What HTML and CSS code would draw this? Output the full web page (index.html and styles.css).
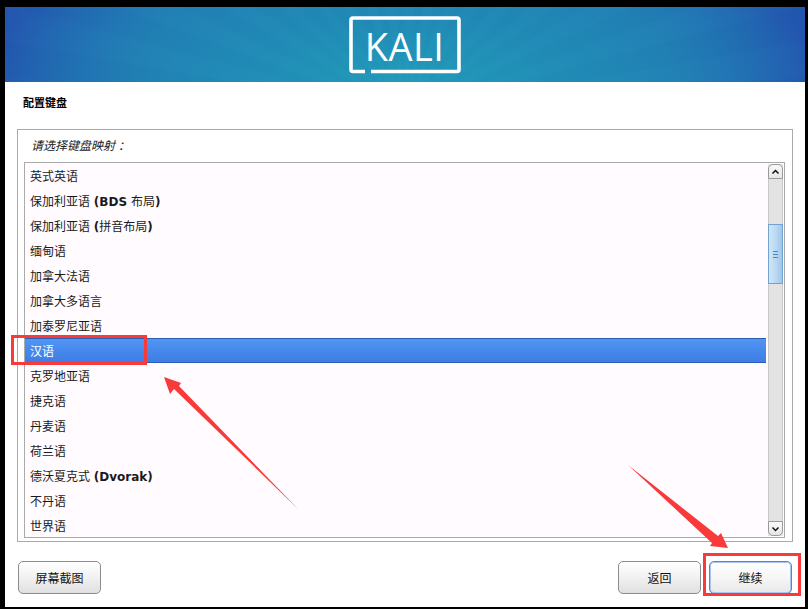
FILE: index.html
```html
<!DOCTYPE html>
<html lang="zh-CN">
<head>
<meta charset="utf-8">
<title>配置键盘</title>
<link rel="stylesheet" href="styles.css">
</head>
<body>
<div class="frame">
  <header class="banner">
    <div class="logo">
      <svg class="logo-box" viewBox="0 0 112 58" width="112" height="58">
        <path class="logo-line" d="M22 55.5H108a2 2 0 0 0 2-2V4a2 2 0 0 0-2-2H4a2 2 0 0 0-2 2V53.5a2 2 0 0 0 2 2H16"/>
      </svg>
      <span class="logo-text">KALI</span>
    </div>
  </header>
  <main class="content">
    <h1 class="title">配置键盘</h1>
    <section class="panel">
      <p class="prompt">请选择键盘映射<span class="colon">：</span></p>
      <div class="listbox">
        <ul class="list">
          <li class="item">英式英语</li>
          <li class="item">保加利亚语 <b class="latin">(BDS</b> 布局<b class="latin">)</b></li>
          <li class="item">保加利亚语 <b class="latin">(</b>拼音布局<b class="latin">)</b></li>
          <li class="item">缅甸语</li>
          <li class="item">加拿大法语</li>
          <li class="item">加拿大多语言</li>
          <li class="item">加泰罗尼亚语</li>
          <li class="item selected">汉语</li>
          <li class="item">克罗地亚语</li>
          <li class="item">捷克语</li>
          <li class="item">丹麦语</li>
          <li class="item">荷兰语</li>
          <li class="item">德沃夏克式 <b class="latin">(Dvorak)</b></li>
          <li class="item">不丹语</li>
          <li class="item">世界语</li>
        </ul>
        <div class="scrollbar">
          <div class="step step-up">
            <svg viewBox="0 0 15 14" width="15" height="14"><path class="chev" d="M4.5 8.5L7.5 5.5L10.5 8.5"/></svg>
          </div>
          <div class="track">
            <div class="thumb"><i></i><i></i><i></i></div>
          </div>
          <div class="step step-down">
            <svg viewBox="0 0 15 14" width="15" height="14"><path class="chev" d="M4.5 5.5L7.5 8.5L10.5 5.5"/></svg>
          </div>
        </div>
      </div>
    </section>
    <footer class="actions">
      <button class="btn">屏幕截图</button>
      <span class="spacer"></span>
      <button class="btn">返回</button>
      <button class="btn focus">继续</button>
    </footer>
  </main>
</div>
<svg class="marks" width="808" height="609" viewBox="0 0 808 609">
  <rect class="mark-box" x="12.5" y="336.5" width="133" height="27"/>
  <rect class="mark-box" x="704.5" y="554.5" width="95" height="40"/>
  <path class="mark-arrow" d="M164 377L181 383L179 386L298 509L174 389L170 394Z"/>
  <path class="mark-arrow" d="M628 465L718 536L721 533L728 548L710 546L712 543Z"/>
</svg>
</body>
</html>
```
FILE: styles.css
```css
* { box-sizing: border-box; }
html, body { margin: 0; padding: 0; }
body {
  width: 808px;
  height: 609px;
  background: #000;
  overflow: hidden;
  position: relative;
  font-family: "DejaVu Sans", "Noto Sans CJK SC", sans-serif;
  font-size: 12px;
  color: #1a1a1a;
}
.frame {
  width: 800px;
  height: 600px;
  margin: 7px 3px 2px 5px;
  background: #fff;
  display: flex;
  flex-direction: column;
}
.banner {
  height: 75px;
  flex: none;
  display: flex;
  justify-content: center;
  background:
    repeating-conic-gradient(from 0deg at 50% 140%, rgba(255,255,255,0.007) 0deg 5deg, rgba(0,0,0,0.007) 5deg 10deg),
    radial-gradient(ellipse 420px 150px at 50% 100%, #219bb9 0%, #2089b6 45%, rgba(33,115,177,0) 100%),
    linear-gradient(90deg, #2255af 0%, #2172b3 18%, #2186b6 50%, #2172b3 82%, #2255af 100%);
}
.logo {
  width: 112px;
  height: 58px;
  margin: 9px 0 0 -1px;
  position: relative;
  display: flex;
  align-items: center;
  justify-content: center;
}
.logo-box { position: absolute; left: 0; top: 0; }
.logo-line { fill: none; stroke: #fff; stroke-width: 3.6; }
.logo-text {
  font-family: "Open Sans", sans-serif;
  font-weight: 500;
  font-size: 38px;
  line-height: 1;
  letter-spacing: 0.4px;
  color: #fff;
  margin-top: 2px;
}
.content {
  flex: 1;
  display: flex;
  flex-direction: column;
  padding: 0 12px 0 12px;
}
.title {
  margin: 15px 0 0 6px;
  height: 32px;
  font-size: 11px;
  line-height: 14px;
  font-weight: 700;
  color: #000;
}
.panel {
  width: 776px;
  height: 413px;
  border: 1px solid #aaa;
  padding: 0 7px 0 6px;
  display: flex;
  flex-direction: column;
}
.prompt {
  margin: 0;
  height: 32px;
  padding: 7px 0 0 7px;
  font-size: 12px;
  line-height: 16px;
  font-style: italic;
  color: #222;
}
.colon { font-family: "Noto Sans CJK TC", sans-serif; margin-left: 3px; }
.listbox {
  flex: 1;
  border: 1px solid #aaa;
  background: #fffbff;
  display: flex;
  min-height: 0;
  margin-bottom: 3px;
}
.list {
  list-style: none;
  margin: 0;
  padding: 0;
  flex: 1;
  overflow: hidden;
}
.item {
  height: 25px;
  line-height: 29px;
  padding-left: 5px;
  width: 741px;
  white-space: nowrap;
}
.latin { font-weight: 700; }
.selected {
  color: #fff;
  background: linear-gradient(180deg, #5295f2 0%, #4687ec 55%, #3f7de4 100%);
  border-top: 1px solid #2a5fb5;
  border-bottom: 1px solid #2a5fb5;
  line-height: 27px;
}
.scrollbar {
  width: 15px;
  margin: 1px 1px 1px 0;
  display: flex;
  flex-direction: column;
  background: #e3e3e3;
  flex: none;
}
.step {
  height: 15px;
  background: linear-gradient(180deg, #fafafa, #e6e6e6);
  border: 1px solid #9a9a9a;
  flex: none;
  display: flex;
  align-items: center;
  justify-content: center;
}
.step-up { border-radius: 5px 5px 0 0; }
.step-down { border-radius: 0 0 5px 5px; }
.step svg { flex: none; }
.chev { fill: none; stroke: #111; stroke-width: 1.5; }
.track { flex: 1; padding-top: 45px; border-left: 1px solid #c8c8c8; border-right: 1px solid #c8c8c8; }
.thumb {
  height: 60px;
  margin: 0 -1px;
  background: linear-gradient(90deg, #d3e6f6 0%, #b5d6f2 60%, #a0c6ea 100%);
  border: 1px solid #6fa3d0;
  display: flex;
  flex-direction: column;
  align-items: center;
  justify-content: center;
  gap: 2px;
}
.thumb i { display: block; width: 5px; height: 1px; background: #4f86b8; }
.actions {
  display: flex;
  align-items: flex-start;
  gap: 8px;
  margin-top: 19px;
  padding: 0 0 0 1px;
  width: 775px;
}
.spacer { flex: 1; }
.btn {
  width: 83px;
  height: 33px;
  padding: 0;
  font: inherit;
  color: #111;
  border: 1px solid #8c8c8c;
  border-radius: 5px;
  background: linear-gradient(180deg, #ffffff 0%, #f4f3f3 45%, #e0e0e0 100%);
}
.focus {
  border: 1px solid #4f86e0;
  box-shadow: inset 0 0 0 1px #a9c5f2;
  background: linear-gradient(180deg, #ffffff 0%, #f7f6f6 50%, #e8e8e8 100%);
}
.marks { position: absolute; left: 0; top: 0; pointer-events: none; }
.mark-box { fill: none; stroke: #f93a3a; stroke-width: 3; }
.mark-arrow { fill: #f93a3a; }
```
